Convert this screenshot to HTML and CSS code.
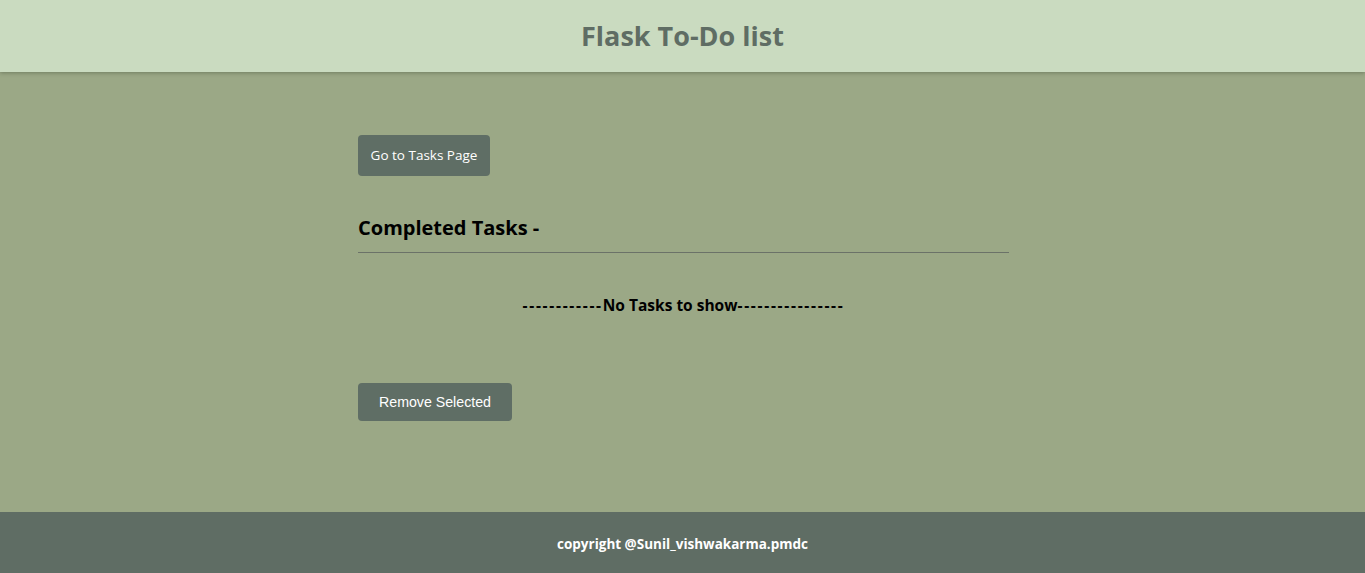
FILE: index.html
```html
<!DOCTYPE html>
<html>
<head>
<meta charset="utf-8">
<title>Flask To-Do list</title>
<link rel="stylesheet" href="styles.css">
</head>
<body>
<header class="top">
  <h1 class="title">Flask To-Do list</h1>
</header>
<main class="main">
  <div class="container">
    <a class="btn btn-go" href="#">Go to Tasks Page</a>
    <h2 class="heading">Completed Tasks -</h2>
    <hr class="rule">
    <p class="empty"><span class="dash">------------</span>No Tasks to show<span class="dash">----------------</span></p>
    <button class="btn btn-remove">Remove Selected</button>
  </div>
</main>
<footer class="foot">
  <p class="copy">copyright @Sunil_vishwakarma.pmdc</p>
</footer>
</body>
</html>
```
FILE: styles.css
```css
* { box-sizing: border-box; }
html, body { margin: 0; padding: 0; }
body {
  font-family: "Open Sans", "Noto Sans", sans-serif;
  background: #9ba886;
  height: 573px;
  display: flex;
  flex-direction: column;
}
.top {
  background: #cadbc0;
  height: 72px;
  display: flex;
  align-items: center;
  justify-content: center;
  padding-bottom: 2px;
  box-shadow: 0 1px 4px rgba(60, 70, 50, 0.45);
  position: relative;
  z-index: 1;
}
.title {
  margin: 0;
  font-size: 27px;
  font-weight: 700;
  color: #5f6d64;
}
.main {
  flex: 1;
}
.container {
  width: 651px;
  margin-left: calc(50% - 324.5px);
  padding-top: 63px;
  display: flex;
  flex-direction: column;
  align-items: flex-start;
}
.btn {
  background: #5f6e65;
  color: #fff;
  border: none;
  border-radius: 4px;
  text-decoration: none;
}
.btn-go {
  font-size: 13.5px;
  height: 41px;
  width: 132px;
  padding-bottom: 2px;
  display: flex;
  align-items: center;
  justify-content: center;
}
.heading {
  margin: 39px 0 0;
  font-size: 20px;
  font-weight: 700;
  color: #000;
  line-height: 26px;
}
.rule {
  width: 100%;
  margin: 11px 0 0;
  border: none;
  border-top: 1px solid #6b7268;
  height: 0;
}
.empty {
  width: 100%;
  text-align: center;
  margin: 40px 0 0;
  font-size: 15.5px;
  font-weight: 700;
  color: #000;
  line-height: 24px;
}
.dash {
  letter-spacing: 1.7px;
}
.btn-remove {
  margin-top: 66px;
  font-family: "Liberation Sans", Arial, sans-serif;
  font-size: 14.2px;
  height: 38px;
  width: 154px;
  cursor: pointer;
}
.foot {
  background: #5f6d64;
  height: 61px;
  display: flex;
  align-items: center;
  justify-content: center;
  padding-top: 3px;
}
.copy {
  margin: 0;
  color: #fff;
  font-size: 13.5px;
  font-weight: 700;
}
```
